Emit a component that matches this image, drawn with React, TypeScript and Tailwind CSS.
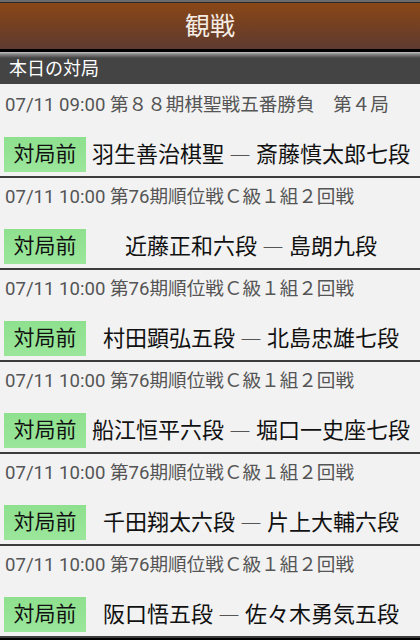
import React from 'react';

interface Match {
  date: string;
  title: string;
  black: string;
  white: string;
}

const matches: Match[] = [
  { date: '07/11 09:00', title: '第８８期棋聖戦五番勝負　第４局', black: '羽生善治棋聖', white: '斎藤慎太郎七段' },
  { date: '07/11 10:00', title: '第76期順位戦Ｃ級１組２回戦', black: '近藤正和六段', white: '島朗九段' },
  { date: '07/11 10:00', title: '第76期順位戦Ｃ級１組２回戦', black: '村田顕弘五段', white: '北島忠雄七段' },
  { date: '07/11 10:00', title: '第76期順位戦Ｃ級１組２回戦', black: '船江恒平六段', white: '堀口一史座七段' },
  { date: '07/11 10:00', title: '第76期順位戦Ｃ級１組２回戦', black: '千田翔太六段', white: '片上大輔六段' },
  { date: '07/11 10:00', title: '第76期順位戦Ｃ級１組２回戦', black: '阪口悟五段', white: '佐々木勇気五段' },
];

export default function App() {
  return (
    <div className="w-[420px] h-[640px] overflow-hidden bg-black flex flex-col font-['Roboto','Noto_Sans_CJK_JP',sans-serif]">
      {/* Title bar */}
      <div className="h-[2px] bg-[#6b6b6b]" />
      <div className="h-[1px] bg-[#2a2a2a]" />
      <div className="h-[46px] flex items-center justify-center bg-[linear-gradient(to_bottom,#8a4716,#5e3a30)]">
        <h1 className="text-[25px] leading-none text-[#f4ece4]">観戦</h1>
      </div>
      <div className="h-[3px] bg-black" />

      {/* Section header */}
      <div className="h-[32px] flex items-center px-[9px] bg-[linear-gradient(to_bottom,#c4c4c4_0px,#8a8a8a_2px,#444444_6px,#444444_100%)]">
        <span className="text-[18px] leading-none text-white pt-[2px]">本日の対局</span>
      </div>

      {/* List */}
      <div className="bg-[#f2f2f2] pt-[2px]">
        {matches.map((m, i) => (
          <div key={i}>
            <div className="h-[90px] flex flex-col">
              <div className="h-[36px] flex items-center px-[5px] pt-[2px] text-[18.6px] leading-none text-[#555] whitespace-nowrap">
                {m.date} {m.title}
              </div>
              <div className="flex-1 flex items-start pt-[15px]">
                <div className="ml-[4px] w-[82px] h-[35px] flex items-center justify-center bg-[linear-gradient(to_bottom,#8ee08e,#9be69b)] text-[21px] leading-none text-[#111]">
                  対局前
                </div>
                <div className="flex-1 h-[35px] flex items-center justify-center pr-[4px] text-[22px] leading-none text-[#111] whitespace-nowrap">
                  <span>{m.black}</span>
                  <span className="mx-[5px] -translate-y-[2px] font-['Noto_Sans_CJK_JP',sans-serif] text-[#555]">―</span>
                  <span>{m.white}</span>
                </div>
              </div>
            </div>
            <div className="h-[2px] bg-[#3c3c3c]" />
          </div>
        ))}
      </div>
    </div>
  );
}
